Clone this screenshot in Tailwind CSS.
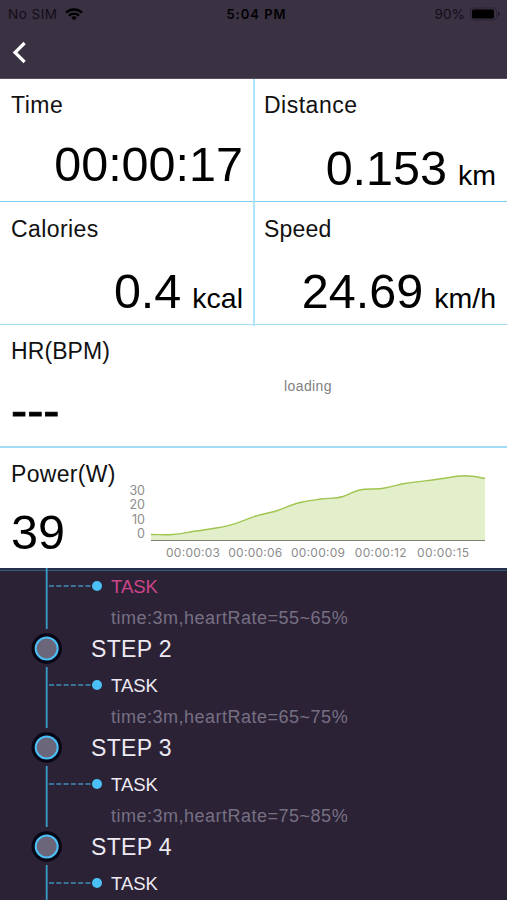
<!DOCTYPE html>
<html lang="en">
<head>
<meta charset="utf-8">
<meta name="viewport" content="width=device-width, initial-scale=1">
<title>Workout</title>
<script src="https://cdn.jsdelivr.net/npm/@tailwindcss/browser@4"></script>
</head>
<body class="w-[507px] h-[900px] overflow-hidden bg-white text-[#111] font-['Liberation_Sans',sans-serif]">
<header class="h-[79px] bg-[#3a3143] border-b border-[#55505c]">
  <div class="h-[28px] grid grid-cols-3 items-center pl-2 pr-[6px] text-black font-['Inter',sans-serif] text-[13px]">
    <div class="flex items-center gap-[7px] text-[#120d17]"><span class="text-[13.5px] tracking-[0.5px]">No SIM</span>
      <svg width="18" height="13" viewBox="0 0 18 13" fill="none" stroke="#000" stroke-width="2.4"><path d="M1 4.7C5.5.5 12.5.5 17 4.7M3.9 7.6c2.9-2.7 7.3-2.7 10.2 0"/><path d="M9 12.2 6.2 9.4c1.6-1.4 4-1.4 5.6 0z" fill="#000" stroke="none"/></svg>
    </div>
    <div class="text-center font-semibold tracking-[1px] pl-[4px] pt-px">5:04 PM</div>
    <div class="flex items-center justify-end gap-1 text-[#120d17]"><span class="text-[13.5px] tracking-[0.1px]">90%</span>
      <svg width="32" height="14" viewBox="0 0 32 14"><rect x="1.5" y="1" width="26" height="12" rx="3" fill="none" stroke="#2a2333"/><rect x="3" y="2.500" width="22" height="9" rx="1.5"/><path d="M29 4.5c2.4.8 2.4 4.2 0 5z" fill="#211b29"/></svg>
    </div>
  </div>
  <svg class="ml-[12px] mt-[13px]" width="16" height="23" viewBox="0 0 16 23" fill="none" stroke="#fff" stroke-width="3.200"><path d="M12.6 2 3 11.5l9.6 9.5"/></svg>
</header>
<main>
  <section class="grid grid-cols-[255px_252px] h-[123px] border-b border-[#7ccdf0]">
    <div class="pt-[12px] pl-[11px] pr-[10px] border-r-2 border-[#b0e4fa]">
      <h2 class="text-[23px] leading-[28px] tracking-[0.5px]">Time</h2>
      <p class="mt-[17px] text-right text-[48.5px] leading-[56px] text-black">00:00:17</p>
    </div>
    <div class="pt-[12px] pl-[9px] pr-[11px]">
      <h2 class="text-[23px] leading-[28px] tracking-[0.5px]">Distance</h2>
      <p class="mt-[21px] flex justify-end items-baseline gap-[11px] text-[48.5px] leading-[56px] text-black whitespace-nowrap"><span>0.153</span><span class="text-[28.5px]">km</span></p>
    </div>
  </section>
  <section class="grid grid-cols-[255px_252px] h-[123px] border-b border-[#a9dcf2]">
    <div class="pt-[13px] pl-[11px] pr-[10px] border-r-2 border-[#b0e4fa]">
      <h2 class="text-[23px] leading-[28px] tracking-[0.4px]">Calories</h2>
      <p class="mt-[20px] flex justify-end items-baseline gap-[11px] text-[48.5px] leading-[56px] text-black whitespace-nowrap"><span>0.4</span><span class="text-[28.5px]">kcal</span></p>
    </div>
    <div class="pt-[13px] pl-[9px] pr-[11px]">
      <h2 class="text-[23px] leading-[28px] tracking-[0.2px]">Speed</h2>
      <p class="mt-[20px] flex justify-end items-baseline gap-[11px] text-[48.5px] leading-[56px] text-black whitespace-nowrap"><span>24.69</span><span class="text-[28.5px]">km/h</span></p>
    </div>
  </section>
  <section class="h-[123px] flex border-b-2 border-[#a3ddf5] pl-[11px] pt-[12px]">
    <div class="w-[273px]">
      <h2 class="text-[23px] leading-[28px] tracking-[0.1px]">HR(BPM)</h2>
      <p class="mt-[17px] text-[48.5px] leading-[56px] text-black [-webkit-text-stroke:0.8px_#000]">---</p>
    </div>
    <p class="pt-[39px] text-[14px] leading-[20px] tracking-[0.4px] text-[#808080]">loading</p>
  </section>
  <section class="h-[120px] flex pl-[11px]">
    <div class="w-[116px] pt-[12px]">
      <h2 class="text-[23px] leading-[28px] tracking-[0.3px]">Power(W)</h2>
      <p class="mt-[16px] text-[48.5px] leading-[56px] text-black">39</p>
    </div>
    <svg width="380" height="120" viewBox="127 448 380 120" font-family="Inter, sans-serif" font-size="12" fill="#8c8c8c">
      <g text-anchor="end" font-size="12.5"><text x="145" y="494.5">30</text><text x="145" y="509">20</text><text x="145" y="523.5">10</text><text x="145" y="538">0</text></g>
      <path fill="#e3eecb" d="M151 534.5C159 534.5 166 535 172 534.5C183 534 188 532 194 531.3C204 530 209 529.3 216 528C225 526.5 231 525 236 523.3C244 521 250 517.5 257 515.7C266 513 272 512.5 279 510C288 506.500 293 504.200 300 502.500C310 500.300 314 500 321 499C332 498 336 498.500 343 496.500C352 493.500 354 490 364 489.200C375 488.800 378 489.500 385 488C395 486 397 484.800 406 483.300C422 481 436 479.800 449 477.500C462 474.700 472 475 485 478.500V540H151z"/>
      <path fill="none" stroke="#a0c651" stroke-width="1.4" d="M151 534.5C159 534.5 166 535 172 534.5C183 534 188 532 194 531.3C204 530 209 529.3 216 528C225 526.5 231 525 236 523.3C244 521 250 517.5 257 515.7C266 513 272 512.5 279 510C288 506.500 293 504.200 300 502.500C310 500.300 314 500 321 499C332 498 336 498.500 343 496.500C352 493.500 354 490 364 489.200C375 488.800 378 489.500 385 488C395 486 397 484.800 406 483.300C422 481 436 479.800 449 477.500C462 474.700 472 475 485 478.500"/>
      <path d="M151 540.500H485" stroke="#7c8370" stroke-width="1.2"/>
      <g text-anchor="middle"><text x="193" y="557" textLength="54">00:00:03</text><text x="255.300" y="557" textLength="54">00:00:06</text><text x="318" y="557" textLength="54">00:00:09</text><text x="380.700" y="557" textLength="52">00:00:12</text><text x="443" y="557" textLength="52">00:00:15</text></g>
    </svg>
  </section>
</main>
<section class="h-[332px] overflow-hidden bg-[#2b2236] bg-[linear-gradient(to_bottom,#26304a_2px,#345c78_2px,#345c78_3px,transparent_3px)]">
  <svg class="hidden" width="0" height="0"><defs>
    <g id="branch"><path d="M46.700 0V61" stroke="#3a9cc9" stroke-width="1.800"/><path d="M49 18H92" stroke="#3f8fb8" stroke-width="1.600" stroke-dasharray="5 2.300"/><circle cx="97" cy="18" r="5" fill="#4bc0f6"/></g>
    <g id="node"><circle cx="46.700" cy="17.500" r="15.200" fill="#080614"/><circle cx="46.700" cy="17.500" r="11" fill="#6c667b" stroke="#4bc0f6" stroke-width="2"/></g>
  </defs></svg>
  <article class="flex h-[63px]">
    <svg class="shrink-0" width="111" height="63"><use href="#branch"/></svg>
    <div><p class="text-[18.5px] leading-[38px] text-[#ce4589]">TASK</p><p class="text-[18px] leading-[25px] tracking-[0.500px] text-[#777083]">time:3m,heartRate=55~65%</p></div>
  </article>
  <article class="h-[99px]">
    <div class="flex h-[36px]"><svg class="shrink-0" width="91" height="36"><use href="#node"/></svg><h3 class="text-[23px] leading-[36px] tracking-[0.350px] text-[#eeeaf2]">STEP 2</h3></div>
    <div class="flex h-[63px]">
      <svg class="shrink-0" width="111" height="63"><use href="#branch"/></svg>
      <div><p class="text-[18.5px] leading-[38px] text-[#eeeaf2]">TASK</p><p class="text-[18px] leading-[25px] tracking-[0.500px] text-[#777083]">time:3m,heartRate=65~75%</p></div>
    </div>
  </article>
  <article class="h-[99px]">
    <div class="flex h-[36px]"><svg class="shrink-0" width="91" height="36"><use href="#node"/></svg><h3 class="text-[23px] leading-[36px] tracking-[0.350px] text-[#eeeaf2]">STEP 3</h3></div>
    <div class="flex h-[63px]">
      <svg class="shrink-0" width="111" height="63"><use href="#branch"/></svg>
      <div><p class="text-[18.5px] leading-[38px] text-[#eeeaf2]">TASK</p><p class="text-[18px] leading-[25px] tracking-[0.500px] text-[#777083]">time:3m,heartRate=75~85%</p></div>
    </div>
  </article>
  <article class="h-[99px]">
    <div class="flex h-[36px]"><svg class="shrink-0" width="91" height="36"><use href="#node"/></svg><h3 class="text-[23px] leading-[36px] tracking-[0.350px] text-[#eeeaf2]">STEP 4</h3></div>
    <div class="flex h-[63px]">
      <svg class="shrink-0" width="111" height="63"><use href="#branch"/></svg>
      <div><p class="text-[18.5px] leading-[38px] text-[#eeeaf2]">TASK</p></div>
    </div>
  </article>
</section>
</body>
</html>
